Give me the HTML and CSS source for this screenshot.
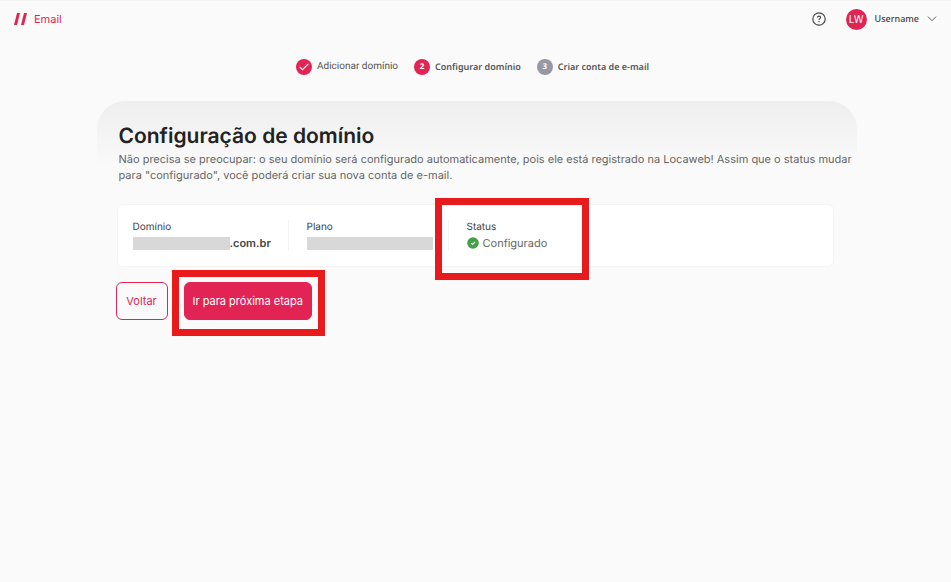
FILE: index.html
```html
<!DOCTYPE html>
<html lang="pt-BR">
<head>
    <meta charset="UTF-8">
    <meta name="viewport" content="width=device-width, initial-scale=1.0">
    <title>Email - Configuração de domínio</title>
    <link rel="stylesheet" href="styles.css">
</head>
<body>
    <header class="topbar">
        <a class="brand" href="#">
            <svg width="14" height="12" viewBox="0 0 14 12" aria-hidden="true">
                <path d="M3 0h3L3 12H0zM10 0h3l-3 12H7z" fill="#e22454"/>
            </svg>
            Email
        </a>
        <div class="account">
            <button class="help" aria-label="Ajuda">
                <svg width="14" height="14" viewBox="0 0 14 14" fill="none" stroke="#4a4a4a" stroke-width="1.2">
                    <circle cx="7" cy="7" r="6.2"/>
                    <path d="M5.4 5.5C5.4 4.6 6 4.100 7 4.100s1.600.6 1.600 1.400C8.600 6.600 7 6.700 7 8M7 9.100v1.200"/>
                </svg>
            </button>
            <button class="user">
                <span class="avatar">LW</span>
                <span class="name">Username</span>
                <svg width="10" height="6" viewBox="0 0 10 6" fill="none" stroke="#555" stroke-width="1" aria-hidden="true">
                    <path d="M1 .7l4 4 4-4"/>
                </svg>
            </button>
        </div>
    </header>

    <ol class="steps">
        <li class="step done">
            <span class="bullet">
                <svg width="10" height="8" viewBox="0 0 10 8" fill="none" stroke="#fff" stroke-width="1.1" aria-hidden="true">
                    <path d="M.6 3.800l2.900 2.900L9.400.900"/>
                </svg>
            </span>
            Adicionar domínio
        </li>
        <li class="step"><span class="bullet">2</span>Configurar domínio</li>
        <li class="step pending"><span class="bullet">3</span>Criar conta de e-mail</li>
    </ol>

    <main class="container">
        <div class="intro">
            <h1>Configuração de domínio</h1>
            <p>Não precisa se preocupar: o seu domínio será configurado automaticamente, pois ele está registrado na Locaweb! Assim que o status mudar para "configurado", você poderá criar sua nova conta de e-mail.</p>
        </div>

        <section class="card">
            <div class="field">
                <span class="label">Domínio</span>
                <div class="value strong"><span class="redacted domain"></span>.com.br</div>
            </div>
            <div class="field">
                <span class="label">Plano</span>
                <div class="value"><span class="redacted plan"></span></div>
            </div>
            <div class="field highlight">
                <span class="label">Status</span>
                <div class="value status">
                    <svg width="12" height="12" viewBox="0 0 12 12" aria-hidden="true">
                        <circle cx="6" cy="6" r="5.800" fill="#43a047"/>
                        <path d="M4 6.100l1.400 1.400L8.200 4.800" fill="none" stroke="#fff" stroke-width="1.1"/>
                    </svg>
                    Configurado
                </div>
            </div>
        </section>

        <div class="actions">
            <button class="btn">Voltar</button>
            <div class="highlight">
                <button class="btn primary">Ir para próxima etapa</button>
            </div>
        </div>
    </main>
</body>
</html>
```
FILE: styles.css
```css
*,
*::after {
    box-sizing: border-box;
}

body {
    margin: 0;
    min-height: 100vh;
    background-color: #fafafa;
    font-family: Inter, sans-serif;
    font-size: 11px;
    line-height: 16px;
    color: #666;
    text-rendering: geometricPrecision;
}

button {
    font: inherit;
    color: inherit;
    background: none;
    border: none;
    padding: 0;
    cursor: pointer;
}

.topbar {
    display: flex;
    justify-content: space-between;
    align-items: center;
    height: 37px;
    padding: 0 14px;
    border-top: 1px solid #f4f4f4;
}

.brand {
    display: flex;
    align-items: center;
    gap: 6px;
    color: #e22454;
    text-decoration: none;
}

.account,
.user {
    display: flex;
    align-items: center;
}

.account {
    gap: 20px;
}

.help {
    display: flex;
}

.user {
    gap: 8px;
    font-family: "Noto Sans", sans-serif;
    font-size: 10px;
    color: #444;
}

.name {
    font-size: 9px;
    font-weight: 500;
}

.avatar {
    width: 21px;
    height: 21px;
    border-radius: 50%;
    background-color: #e22454;
    color: #fff;
    line-height: 21px;
    text-align: center;
}

.steps {
    display: flex;
    justify-content: center;
    gap: 16px;
    list-style: none;
    margin: 22px 0 26px;
    padding: 0 6px 0 0;
}

.step {
    display: flex;
    align-items: center;
    gap: 5px;
    font-family: "Noto Sans", sans-serif;
    font-size: 9px;
    font-weight: 600;
    color: #555;
}

.step.done {
    font-family: Roboto, sans-serif;
    font-size: 10px;
    font-weight: 400;
}

.bullet {
    display: flex;
    align-items: center;
    justify-content: center;
    width: 16px;
    height: 16px;
    border-radius: 50%;
    background-color: #e22454;
    color: #fff;
    font-size: 8px;
    font-weight: 700;
}

.pending .bullet {
    background-color: #9698a4;
}

.container {
    max-width: 762px;
    margin: 0 auto;
    padding-left: 2px;
}

.intro {
    padding: 22px 4px 21px 22px;
    border-radius: 28px 28px 0 0;
    background: linear-gradient(#eee, #fafafa 66px);
}

h1 {
    margin: 0;
    font-size: 21px;
    line-height: 28px;
    font-weight: 600;
    color: #222;
}

.intro p {
    margin: 0;
}

.card {
    display: grid;
    grid-template-columns: 155px 160px 1fr;
    margin: 0 23px 15px 20px;
    padding: 15px;
    background-color: #fff;
    border: 1px solid #f4f4f4;
    border-radius: 6px;
}

.field {
    padding-left: 18px;
    border-left: 1px solid #f2f2f2;
}

.field:first-child {
    padding-left: 0;
    border-left: none;
}

.label {
    display: block;
    font-size: 10px;
    line-height: 15px;
    color: #444;
}

.value {
    display: flex;
    align-items: center;
    height: 16px;
}

.strong {
    font-weight: 600;
    color: #444;
}

.redacted {
    height: 13px;
    background-color: #d8d8d8;
}

.domain {
    width: 97px;
}

.plan {
    width: 126px;
}

.status {
    gap: 4px;
}

.actions {
    display: flex;
    gap: 16px;
    margin-left: 19px;
}

.btn {
    min-width: 52px;
    height: 38px;
    padding: 0 8px;
    border: 1px solid #e22454;
    border-radius: 6px;
    color: #e22454;
}

.btn.primary {
    background-color: #e22454;
    color: #fff;
}

/* red marker frames drawn over the step to follow */
.highlight {
    position: relative;
}

.highlight::after {
    content: "";
    position: absolute;
    inset: -12px -13px -16px -12px;
    border: 7px solid #e81a1c;
    pointer-events: none;
}

.field.highlight::after {
    inset: -22px auto auto -14px;
    width: 154px;
    height: 82px;
}
```
